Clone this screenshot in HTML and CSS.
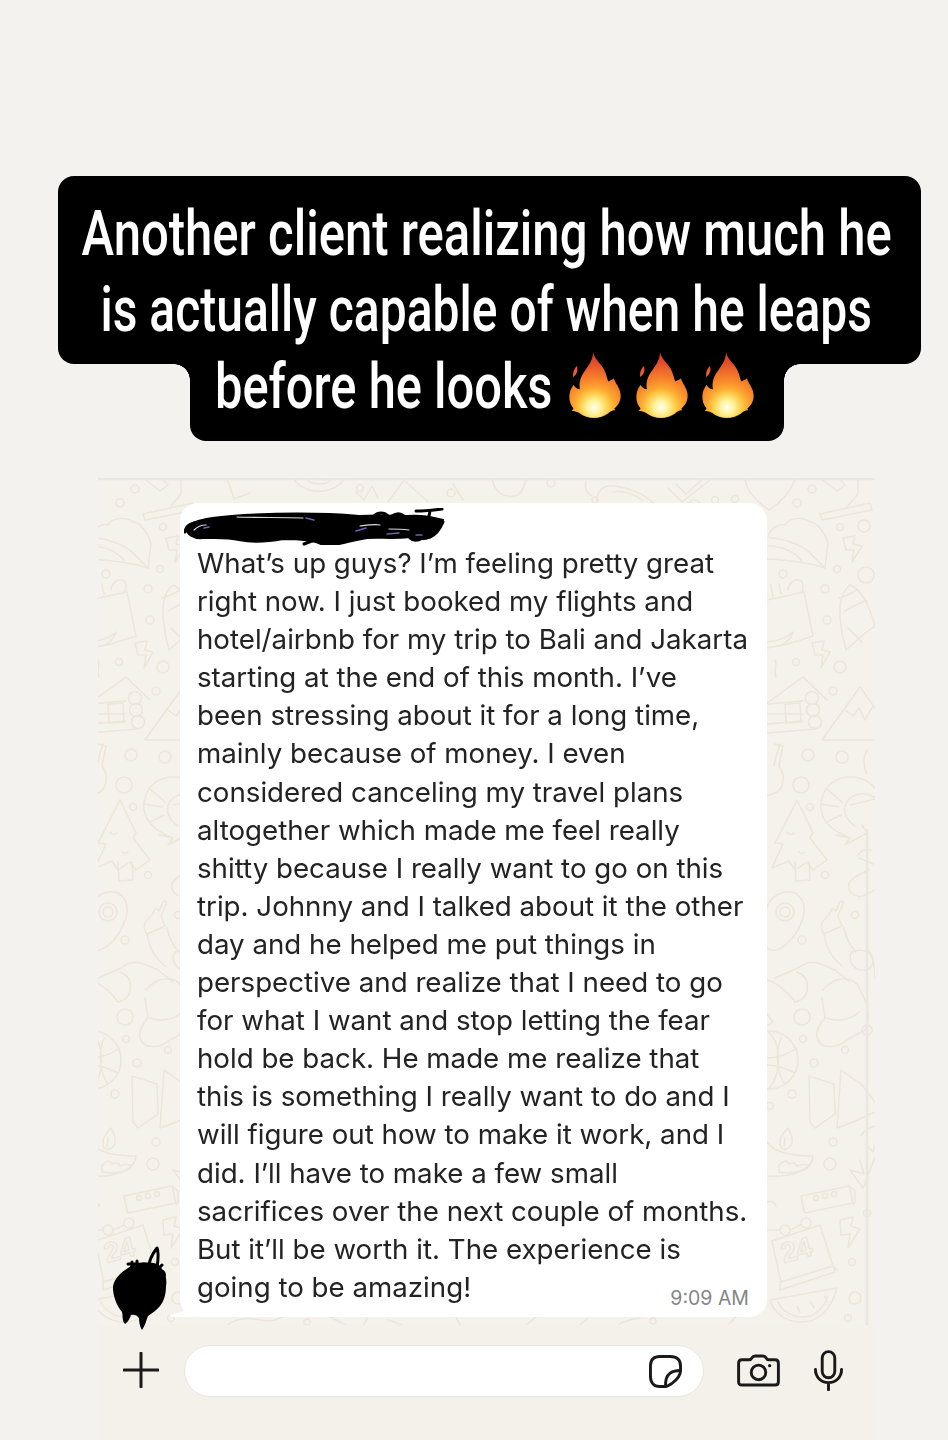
FILE: index.html
```html
<!DOCTYPE html>
<html lang="en">
<head>
<meta charset="utf-8">
<title>Client story</title>
<link rel="stylesheet" href="styles.css">
</head>
<body>
<svg class="defs" width="0" height="0" aria-hidden="true">
  <defs>
    <radialGradient id="fireOuter" gradientUnits="userSpaceOnUse" cx="105" cy="195" r="175">
      <stop offset="0" stop-color="#fff3a0"/>
      <stop offset="0.25" stop-color="#ffc63a"/>
      <stop offset="0.5" stop-color="#f98a2a"/>
      <stop offset="0.85" stop-color="#e2482a"/>
      <stop offset="1" stop-color="#d33c2a"/>
    </radialGradient>
    <radialGradient id="fireCore" gradientUnits="userSpaceOnUse" cx="103" cy="190" r="62">
      <stop offset="0" stop-color="#fffef0"/>
      <stop offset="0.35" stop-color="#fff29a"/>
      <stop offset="1" stop-color="#ffc23a" stop-opacity="0"/>
    </radialGradient>
    <symbol id="flame" viewBox="25 18 162 206">
      <path fill="url(#fireOuter)" d="M100 18c4 22 22 34 33 52 7 12 10 26 14 40 6-2 14-6 18-10 4 16 20 30 21 52 1 18-8 34-20 42 2 2 3 4 2 6-10 1-14 3-22 10-14 9-30 13-46 13-16 0-32-5-44-15-8-4-14-6-24-6 4-3 5-5 7-8-9-10-14-24-13-40 1-14 6-24 13-34 4 8 12 14 20 14-4-20 2-40 16-58 10-14 25-34 25-58z"/>
      <path fill="url(#fireOuter)" d="M50 62c-8 6-14 18-12 34 6-4 12-12 13-20 0-5 0-10-1-14z"/>
      <ellipse fill="url(#fireCore)" cx="103" cy="180" rx="62" ry="44"/>
    </symbol>
    <g id="tile" fill="none" stroke="#ece5d9" stroke-width="1.500" stroke-linecap="round" stroke-linejoin="round">
      <!-- bottle, capsule -->
      <path d="M45 36 95 25l2 7-50 10zM73 28l10-12M48 2l14 11 8-6-6-7M83 0v16"/>
      <!-- taco -->
      <path d="M-7 59c2-9 12-14 17-12 5-9 20-7 25-3 7 0 15 11 18 21l-3 25c-15-5-40-8-58-9"/>
      <path d="M-5 60c10 0 30 5 40 15l15 15M-7 68c15 0 25 5 33 14"/>
      <!-- bag, thumb -->
      <path d="M-8 122 29 114l9 44-25 8-21 4M13 112c0-6 6-11 10-10 5 0 6 6 4 12M-4 107l2 12M4 106l2 10M-8 164c10-1 20-4 26-10-2 7-8 12-14 14"/>
      <!-- bolts -->
      <path d="M68 60l12-2-2 8 9 2-10 16 2-12-8 0zM37 165l12-2-2 9 8 2-9 16 2-13-8 0zM65 742l13-3-2 9 9 3-12 19 2-14-9 1z"/>
      <!-- surfboard -->
      <path d="M75 107c-10 8-13 23-7 53l3 12 19-17 10-7c-5-18-12-36-25-41zM64 120c8-2 14-6 18-8M70 133c8-4 16-10 22-10M73 150l14 14"/>
      <!-- cabin -->
      <path d="M0 182c3 5-2 10 1 17M-8 225l36-26 24 23M-8 255l48-4M-8 236h36M-8 226l36-3M-8 246l36-3"/>
      <circle cx="37" cy="220" r="6.500"/><circle cx="38" cy="232" r="6.500"/><circle cx="40" cy="244" r="6.500"/>
      <path d="M10 226l15-1 1 19-15 1z"/>
      <!-- mountain -->
      <path d="M47 262 85 209l15 21M47 262h53M70 232l8 6 6-8 6 12 8-14"/>
      <!-- guitar -->
      <path d="M5 266c-3 8-5 16-6 22M0 266l8 2-4 20c6 8 6 20-2 26-4 2-7 3-10 3"/>
      <path d="M92 272c-4 7-4 17 0 24"/>
      <!-- shrimp -->
      <path d="M100 310c-15-18-50-15-54 15-2 20 16 30 29 35l-5 7 22-12 -5-8M100 320c-12-8-26-4-30 8-2 8 3 15 10 20M51 310l16 14M46 326l18 3M52 344l14-7M76 327l24-6M75 360l-14-3"/>
      <!-- tree -->
      <path d="M22 322 0 365l8 1-11 24 17-7 6 9 12-8 6 8 14-10-17-22 3-5zM12 354c2 3 5 3 7 1M24 374c2 2 4 2 6 0M20 384l1 19 14-1-1-18"/>
      <!-- stocking -->
      <path d="M84 380l14 6M94 392c-9 4-18 8-20 14-2 8 6 14 14 12l12-6M82 378c2-4 8-8 14-6"/>
      <!-- egg -->
      <path d="M-8 470c8 8 28-5 36-30 4-15-3-28-18-26-10 2-18 11-18 16"/>
      <circle cx="10" cy="434" r="9"/><circle cx="10" cy="434" r="5"/>
      <!-- astronaut -->
      <path d="M47 445c2-5 9-8 9-12 0-3 3-3 5 0l4-9c2-2 4-1 3 2l-5 12 4 10-18 8c-3-3-3-8-2-11z"/>
      <path d="M49 456c2 14 8 24 18 32M69 450c2 10 6 18 12 24M0 500l23-10c12-10 22-5 37 2l15 12"/>
      <path d="M77 474c6-3 16-2 20 4 3 6-1 14-7 14-6 1-12-2-14-8-1-4-1-8 1-10z"/>
      <path d="M-8 502c8 2 20 10 28 22 8-2 14-8 12-20-1-6-6-8-10-10"/>
      <path d="M48 512c12-15 32-15 37 0 10 18 10 28 5 40l-18 10c-12 10-27 8-30-2-2-10 8-20 8-20l-3-20"/>
      <path d="M52 540c8 4 24 2 32-6"/>
      <path d="M-8 536l6 8-6 4M92 470c6 8 8 20 8 30"/>
      <!-- globe -->
      <circle cx="-6" cy="582" r="29"/>
      <path d="M-8 553c14 10 16 40 2 58M22 570c-12 8-24 10-30 10M20 595c-12-6-22-8-28-8M6 560c-6 14-4 36 4 46"/>
      <!-- book -->
      <path d="M34 598l25 8 1 30-20 14-5-6zM62 650l4-58 20 14 14 18M62 650l16-6 22-10"/>
      <!-- diya -->
      <path d="M13 650c-6 6-9 12-8 17 1 4 4 5 6 4 5-1 7-6 6-10 0-4-2-7-4-11zM10 660l-1 8"/>
      <path d="M-8 664c8 12 28 14 46 14 0 12-18 22-46 20M4 688c4-6 8-6 10-2 4-2 6-2 8 2 4-2 8-2 12 0-4 6-18 8-30 6z"/>
      <!-- tulip -->
      <path d="M100 648c-6 2-12 6-14 10M90 666l8 8 2-8M75 692l14 4-4-14M100 680c-6 12-8 22-12 30l-13-18"/>
      <!-- alarm box -->
      <path d="M26 718l48-10 4 17-48 10zM26 718l3 16M74 708l6 5 0 12-2 2"/>
      <circle cx="41" cy="720" r="2.500"/><circle cx="50" cy="718" r="2.500"/><circle cx="59" cy="716" r="2.500"/>
      <!-- calendar -->
      <path d="M-3 763l48-16 13 41-52 16zM5 804l53-16 2 6-55 18zM58 788l4 4"/>
      <circle cx="10" cy="752" r="5"/><circle cx="31" cy="745" r="5"/>
      <path d="M-8 752H5M15 752l11-5"/>
      <!-- melon -->
      <path d="M-5 822c6 25 54 38 67-12zM3 824c8 18 40 24 50-6M22 828l3 6M36 824l3 6M50 818l2 6"/>
      <path d="M-8 724c4-2 8 0 9 4M92 782v6M84 420v0"/>
      <!-- small circles -->
      <circle cx="37" cy="11" r="4"/><circle cx="22" cy="25" r="4"/><circle cx="65" cy="49" r="3.500"/><circle cx="89" cy="48" r="6"/>
      <circle cx="62" cy="91" r="3.500"/><circle cx="91" cy="97" r="8"/><circle cx="8" cy="96" r="4"/><circle cx="50" cy="111" r="4"/>
      <circle cx="52" cy="142" r="4"/><circle cx="21" cy="184" r="3.500"/><circle cx="65" cy="189" r="6"/><circle cx="58" cy="213" r="4"/>
      <circle cx="33" cy="277" r="6"/><circle cx="67" cy="279" r="6"/><circle cx="26" cy="307" r="8"/><circle cx="35" cy="329" r="3.500"/>
      <circle cx="50" cy="397" r="3.500"/><circle cx="27" cy="539" r="8"/><circle cx="28" cy="561" r="3.500"/><circle cx="70" cy="572" r="3.500"/>
      <circle cx="92" cy="552" r="5"/><circle cx="39" cy="585" r="4"/><circle cx="17" cy="616" r="4"/><circle cx="-5" cy="628" r="3.500"/>
      <circle cx="58" cy="664" r="4"/><circle cx="55" cy="686" r="6"/><circle cx="92" cy="735" r="3.500"/><circle cx="80" cy="820" r="6"/>
      <circle cx="73" cy="840" r="3.500"/><circle cx="77" cy="784" r="3.500"/><circle cx="27" cy="462" r="4"/><circle cx="80" cy="437" r="3.500"/>
    </g>
  </defs>
</svg>

<header class="caption">
  <div class="caption-top">
    <span class="caption-line caption-first">Another client realizing how much he</span>
    <span class="caption-line caption-second">is actually capable of when he leaps</span>
  </div>
  <div class="caption-bottom">
    <span class="caption-line caption-last">before he looks</span>
    <span class="flames">
      <svg class="flame" aria-hidden="true"><use href="#flame"/></svg>
      <svg class="flame" aria-hidden="true"><use href="#flame"/></svg>
      <svg class="flame" aria-hidden="true"><use href="#flame"/></svg>
    </span>
  </div>
</header>

<main class="chat">
  <svg class="wallpaper" viewBox="0 0 777 847" aria-hidden="true">
    <use href="#tile"/>
    <use href="#tile" x="677"/>
    <g fill="none" stroke="#ece5d9" stroke-width="1.500" stroke-linecap="round" stroke-linejoin="round">
      <path class="rule" d="M0 1H777"/>
      <path class="rule" d="M769 352V847"/>
      <!-- top strip -->
      <path d="M130 3l6 18 16-6M195 0a29 24 0 0 0 52 0M207 0a17 14 0 0 0 28 0M222 0a5 5 0 0 0 8 0M258 14l8 8 8-14 6 12M290 24l16-22 24 22M355 6l10 16M394 0c2 14 12 20 22 18 6 0 10-8 12-18M488 4c-2 8 2 12 6 14M499 24c-1-10 6-18 18-16 14 2 30 8 38 17M515 14c10-2 22 2 30 9M570 10l14 14 28-22M578 6l10 10 18-16M590 25c4-4 8-4 12 0M647 2c2 12 12 22 24 30 10-6 20-16 26-30"/>
      <circle cx="453" cy="5" r="4"/><circle cx="353" cy="15" r="4"/><circle cx="617" cy="22" r="3.500"/><circle cx="637" cy="21" r="3.500"/><circle cx="262" cy="10" r="3.500"/><circle cx="497" cy="22" r="3"/>
      <!-- bottom strip -->
      <path d="M130 847c4-4 16-8 26-6 10 2 22 4 30-4M230 838l20 10M266 847l4-9M290 842l14 5M362 847l-4-8M438 839l-10 8M490 840l-8 7M520 847c6-4 14-6 22-7M630 847l8-8"/>
      <circle cx="209" cy="844" r="3"/><circle cx="555" cy="843" r="3"/>
    </g>
    <text class="wall-num" transform="translate(9 785) rotate(-15)">24</text>
    <text class="wall-num" transform="translate(686 785) rotate(-15)">24</text>
  </svg>

  <article class="bubble">
    <svg class="tail" viewBox="0 0 24 14" aria-hidden="true"><path d="M24 0v14H6c-3 1-6-1-5-3 3 1 5-1 8-1 6-2 10-5 15-10z"/></svg>
    <svg class="sender" viewBox="0 0 262 38" aria-hidden="true">
      <path class="ink ink-fat" d="M2 20c6-8 26-11 58-13 40-2 80-2 115 1 20-1 36 0 48 0 12-1 22 0 36 4-2 8-8 14-12 17-6 3-16 3-22 0-16 2-30 0-42 1-12 2-18 4-28 6-8 0-10 0-18 0-6-3-20-5-38-5-16 3-30 4-44 1-12-3-24-2-36-2-10 1-16-4-17-10z"/>
      <path class="ink ink-thin" d="M1 24c1-7 8-10 16-10M120 36c14-6 30-10 46-9M232 3c9 0 18-1 26-2M246 3l-2 10M246 29c6-2 10-8 13-15M190 8c4-4 10-4 14 0M208 8c4-3 9-3 12 0M226 30c3 3 8 3 12 0"/>
      <path class="ink-white" d="M53 9c22 1 44 0 66 1M10 22c4-4 8-5 12-5M176 18c8-1 14-2 20-1M205 21c7 0 12 0 20 1"/>
      <path class="ink-violet" d="M20 20l5-1M122 10l8 2M172 23l10-3M203 26l12-1M232 27l6 0"/>
    </svg>
    <p class="message">What’s up guys? I’m feeling pretty great<br>right now. I just booked my flights and<br>hotel/airbnb for my trip to Bali and Jakarta<br>starting at the end of this month. I’ve<br>been stressing about it for a long time,<br>mainly because of money. I even<br>considered canceling my travel plans<br>altogether which made me feel really<br>shitty because I really want to go on this<br>trip. Johnny and I talked about it the other<br>day and he helped me put things in<br>perspective and realize that I need to go<br>for what I want and stop letting the fear<br>hold be back. He made me realize that<br>this is something I really want to do and I<br>will figure out how to make it work, and I<br>did. I’ll have to make a few small<br>sacrifices over the next couple of months.<br>But it’ll be worth it. The experience is<br>going to be amazing!</p>
    <time class="stamp">9:09 AM</time>
  </article>

  <svg class="avatar" viewBox="0 0 56 86" aria-hidden="true">
    <path d="M16 23c6-5 14-7 22-5 6-1 11 3 13 8 3 4 4 10 3 15 0 8-2 15-6 20-3 4-8 7-12 10-2 5-3 10-6 14-2-3-3-8-3-12-2-3-5-4-8-3-1 3-3 7-6 9-3-3-2-8-3-12C4 60 1 50 1 43c0-8 7-15 15-20z"/>
    <path class="avatar-stroke" d="M36 24c1-8 5-16 9-21 2 4 1 13 0 20M20 24v-7M25 22v-6M16 19h10M45 25l5-5M50 26c2 1 3 3 2 6"/>
  </svg>
</main>

<footer class="composer">
  <svg class="icon icon-plus" viewBox="0 0 36 36" aria-hidden="true"><path d="M18 1v34M1 18h34"/></svg>
  <div class="input">
    <svg class="icon icon-sticker" viewBox="0 0 34 34" aria-hidden="true">
      <path d="M17 32.500H11C5 32.500 1.500 28.500 1.500 22V11C1.500 5 5 1.500 11 1.500H22C28.500 1.500 32.500 5 32.500 11V16C32.500 22 28 26 24 29 21 31 19 32.500 17 32.500z"/>
      <path d="M17 32.500C17 26 17.500 22 22 18.500 25 16.500 29 16 32.500 16"/>
    </svg>
  </div>
  <svg class="icon icon-camera" viewBox="0 0 44 34" aria-hidden="true">
    <path d="M5 6h7.500c1.500 0 2-.8 2.800-2.200C16 2.500 17 2 18.500 2h8c1.500 0 2.500.5 3.200 1.800.8 1.400 1.300 2.200 2.800 2.200H39c2.300 0 3.500 1.200 3.500 3.500v19c0 2.300-1.200 3.500-3.500 3.500H5c-2.300 0-3.500-1.200-3.500-3.500v-19C1.500 7.200 2.700 6 5 6z"/>
    <circle cx="22" cy="19" r="7.500"/>
    <circle class="dot" cx="33.500" cy="12" r="1.700"/>
  </svg>
  <svg class="icon icon-mic" viewBox="0 0 30 42" aria-hidden="true">
    <rect x="8.500" y="1.500" width="13" height="27" rx="6.500"/>
    <path d="M1.500 20c0 8 6 13.500 13.500 13.500S28.500 28 28.500 20M15 33.500V41"/>
  </svg>
</footer>
</body>
</html>
```
FILE: styles.css
```css
* { box-sizing: border-box; }

html, body { margin: 0; padding: 0; }

body {
  width: 948px;
  height: 1440px;
  overflow: hidden;
  background: #f3f2ee;
  position: relative;
}

.defs { position: absolute; }

/* Headline */
.caption {
  margin: 176px 27px 0 58px;
  color: #fff;
  font-family: "Roboto", "Liberation Sans", sans-serif;
  font-weight: 500;
  font-size: 63px;
  line-height: 76px;
  white-space: nowrap;
}

.caption-top {
  height: 188px;
  padding: 20px 6px 0 0;
  background: #000;
  border-radius: 16px;
  display: flex;
  flex-direction: column;
  align-items: center;
}

.caption-bottom {
  position: relative;
  height: 77px;
  width: 594px;
  margin-left: 132px;
  padding-left: 25px;
  background: #000;
  border-radius: 0 0 16px 16px;
  display: flex;
  align-items: flex-start;
}

.caption-bottom::before,
.caption-bottom::after {
  content: "";
  position: absolute;
  top: 0;
  width: 16px;
  height: 16px;
}

.caption-bottom::before {
  left: -16px;
  background: radial-gradient(circle at 0 100%, #f3f2ee 15.500px, #000 16px);
}

.caption-bottom::after {
  right: -16px;
  background: radial-gradient(circle at 100% 100%, #f3f2ee 15.500px, #000 16px);
}

.caption-line {
  display: block;
  filter: blur(0.4px);
}

.caption-first { transform: scaleX(0.778); }
.caption-second { transform: scaleX(0.762); }

.caption-last {
  width: 335px;
  margin-top: -15px;
  transform: scaleX(0.775);
  transform-origin: 0 50%;
}

.flames {
  display: flex;
  gap: 12.500px;
  margin: -12px 0 0 18px;
}

.flame { width: 54px; height: 66px; display: block; }

/* Chat area */
.chat {
  position: relative;
  height: 847px;
  margin: 37px 73px 0 98px;
  padding: 25px 0 0 82px;
  background: #f5f2ec;
}

.wallpaper {
  position: absolute;
  top: 0;
  left: 0;
  width: 777px;
  height: 847px;
  overflow: hidden;
}

.rule { stroke: #e9e7e1; stroke-width: 2.500; }

.wall-num {
  font-family: "Liberation Sans", sans-serif;
  font-size: 28px;
  font-weight: 700;
  fill: none;
  stroke: #ece5d9;
  stroke-width: 1.200;
}

.bubble {
  position: relative;
  width: 587px;
  height: 814px;
  padding: 7px 0 0 17px;
  background: #fff;
  border-radius: 18px;
}

.tail {
  position: absolute;
  left: -11px;
  bottom: 0;
  width: 24px;
  height: 14px;
  fill: #fff;
}

.sender {
  display: block;
  width: 262px;
  height: 38px;
  margin-left: -13px;
  margin-top: -2px;
}

.ink { fill: none; stroke: #000; stroke-linecap: round; stroke-linejoin: round; }
.ink-fat { fill: #000; stroke-width: 2; }
.ink-thin { stroke-width: 3; }
.ink-white { fill: none; stroke: #d8d8e0; stroke-width: 1.200; stroke-linecap: round; }
.ink-violet { fill: none; stroke: #6a62b8; stroke-width: 1.500; stroke-linecap: round; }

.message {
  margin: -2px 0 0;
  color: #232323;
  font-family: "Inter", "Liberation Sans", sans-serif;
  font-size: 27.700px;
  line-height: 38.100px;
  white-space: nowrap;
  filter: blur(0.3px);
}

.stamp {
  position: absolute;
  right: 18px;
  bottom: 7px;
  color: #858585;
  font-family: "Inter", "Liberation Sans", sans-serif;
  font-size: 19.500px;
  line-height: 24px;
}

.avatar {
  position: absolute;
  left: 14px;
  top: 767px;
  width: 56px;
  height: 86px;
  fill: #000;
}

.avatar-stroke { fill: none; stroke: #000; stroke-width: 3; stroke-linecap: round; stroke-linejoin: round; }

/* Composer */
.composer {
  display: flex;
  align-items: flex-start;
  height: 115px;
  margin: 0 73px 0 98px;
  padding: 20px 0 0 25px;
  background: #f3f1ea;
}

.input {
  display: flex;
  align-items: center;
  justify-content: flex-end;
  width: 520px;
  height: 52px;
  margin-left: 25px;
  padding-right: 21px;
  background: #fff;
  border: 1.500px solid #e9e6df;
  border-radius: 26px;
}

.icon { display: block; fill: none; stroke: #1a1a1a; stroke-width: 3; stroke-linecap: round; stroke-linejoin: round; flex: none; }
.icon .dot { fill: #1a1a1a; stroke: none; }

.icon-plus { width: 36px; height: 36px; margin-top: 7px; }
.icon-sticker { width: 33px; height: 33px; }
.icon-camera { width: 43px; height: 33px; margin: 9px 0 0 33px; }
.icon-mic { width: 29px; height: 41px; margin: 5px 0 0 34px; }
```
